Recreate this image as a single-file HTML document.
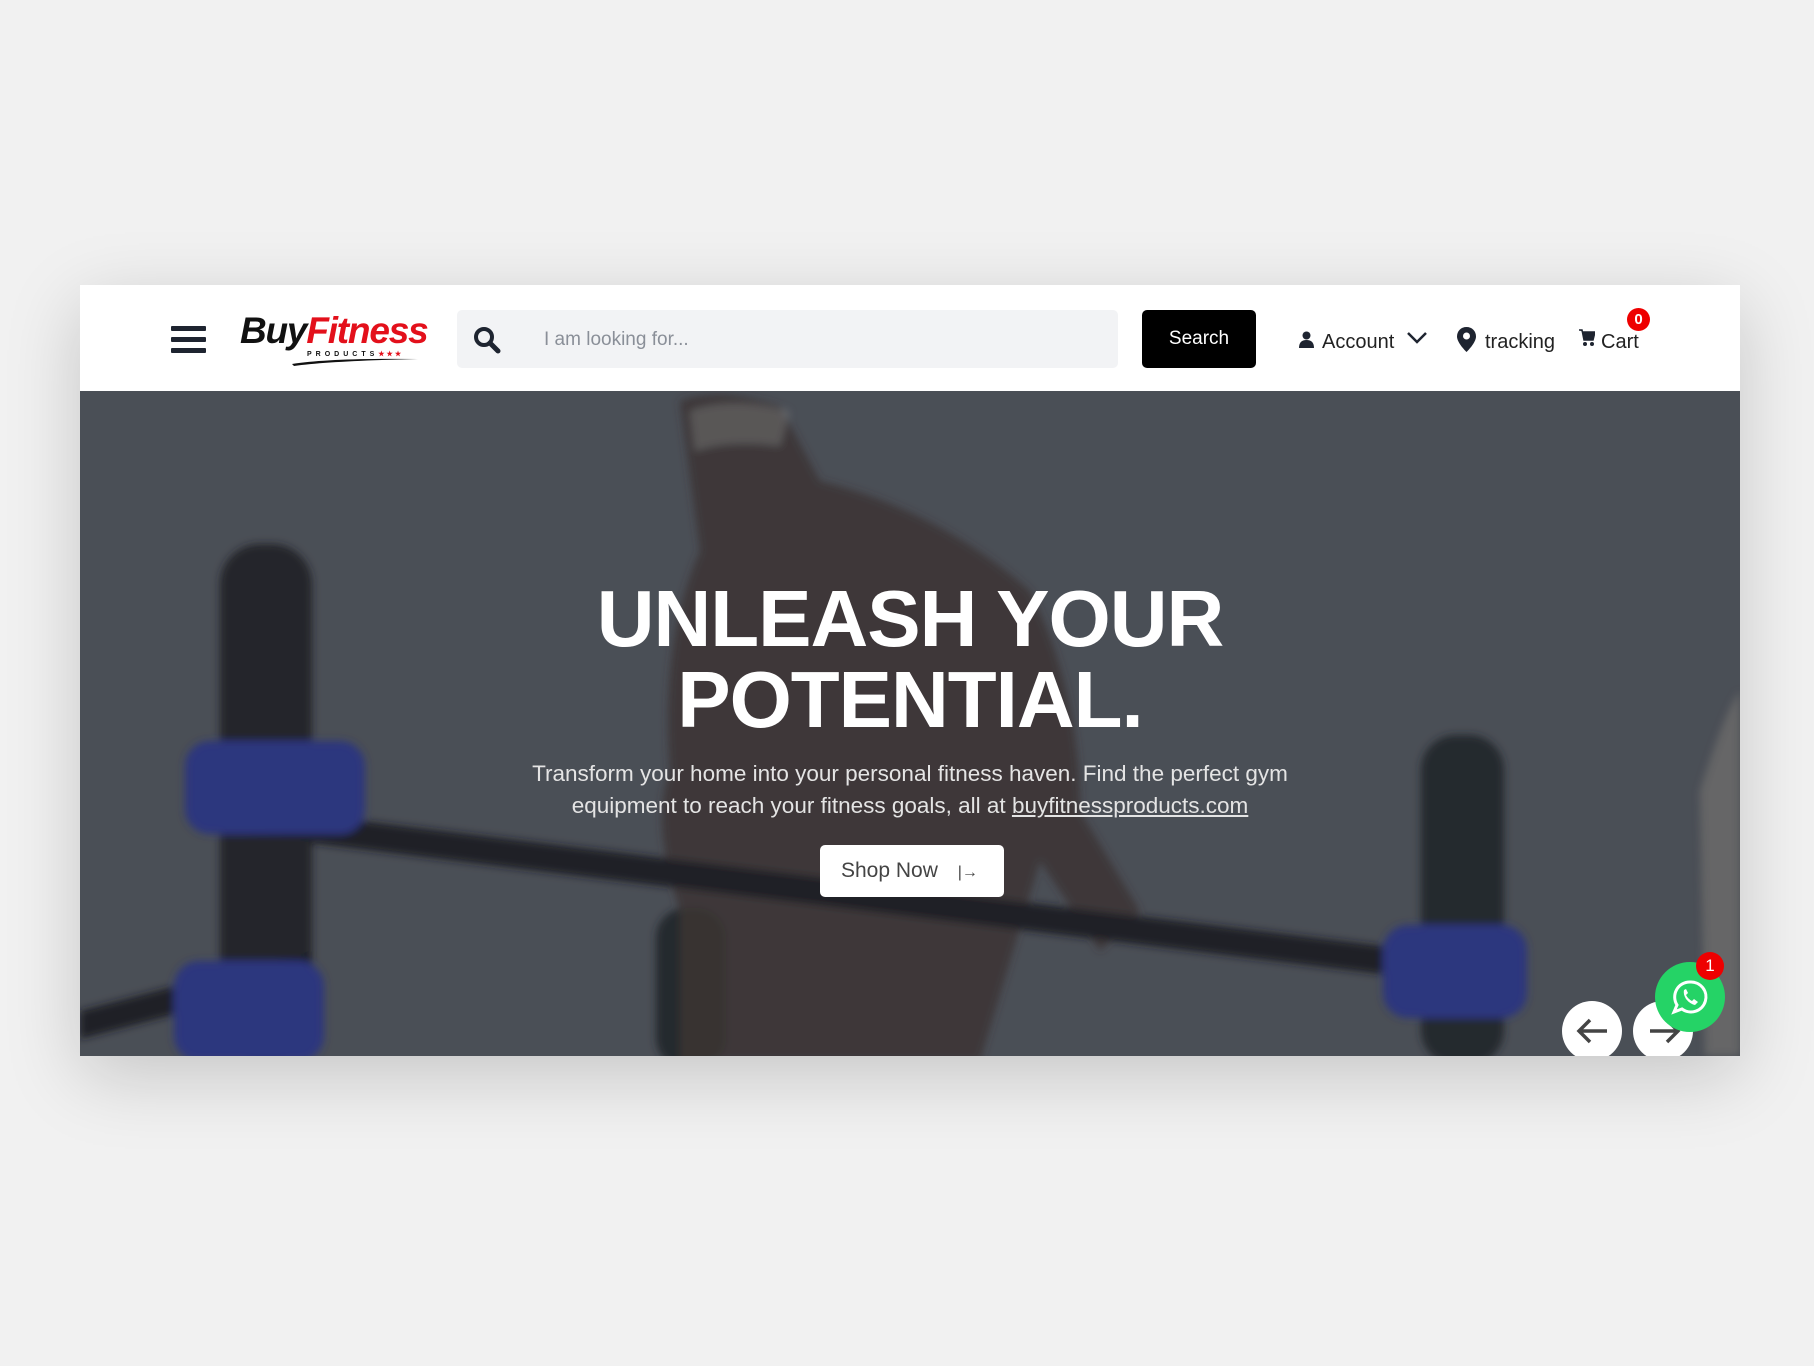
<!DOCTYPE html>
<html><head><meta charset="utf-8"><style>
*{margin:0;padding:0;box-sizing:border-box}
html,body{width:1814px;height:1366px;overflow:hidden;background:#f1f1f1;font-family:"Liberation Sans",Arial,sans-serif}
.card{position:absolute;left:80px;top:285px;width:1660px;height:771px;background:#fff;box-shadow:0 20px 70px rgba(0,0,0,.18)}
.nav{position:absolute;left:0;top:0;width:1660px;height:106px;background:#fff}
.hero{position:absolute;left:0;top:106px;width:1660px;height:665px;background:#4c5058;overflow:hidden}
.abs{position:absolute}
.t{font-size:20px;color:#222;position:absolute;top:44px;line-height:26px}
</style></head><body>
<div class="card">
 <div class="nav">
  <div class="abs" style="left:91px;top:41px;width:35px;height:5px;background:#1e2430;border-radius:1px"></div>
  <div class="abs" style="left:91px;top:52px;width:35px;height:5px;background:#1e2430;border-radius:1px"></div>
  <div class="abs" style="left:91px;top:63px;width:35px;height:5px;background:#1e2430;border-radius:1px"></div>
  <div class="abs" style="left:160px;top:26px;font-size:37px;font-weight:bold;font-style:italic;letter-spacing:-1.2px;line-height:40px"><span style="color:#111">Buy</span><span style="color:#e3101b">Fitness</span></div>
  <div class="abs" style="left:227px;top:65px;font-size:7px;font-weight:bold;letter-spacing:4px;color:#111">PRODUCTS<span style="color:#e3101b;letter-spacing:2px">★★★</span></div>
  <svg class="abs" style="left:210px;top:71px" width="130" height="10"><path d="M2 8 Q40 2 128 3 Q40 5 4 10Z" fill="#111"/></svg>
  <div class="abs" style="left:377px;top:25px;width:661px;height:58px;background:#f2f3f5;border-radius:5px"></div>
  <svg class="abs" style="left:392px;top:40px" width="30" height="30" viewBox="0 0 30 30"><circle cx="12" cy="12" r="8" fill="none" stroke="#1e2430" stroke-width="4"/><path d="M18 18 L26 26" stroke="#1e2430" stroke-width="5" stroke-linecap="round"/></svg>
  <div class="abs" style="left:464px;top:43px;font-size:19px;color:#8a8f98;line-height:24px">I am looking for...</div>
  <div class="abs" style="left:1062px;top:25px;width:114px;height:58px;background:#000;border-radius:5px;color:#fff;font-size:19px;text-align:center;line-height:58px">Search</div>
  <svg class="abs" style="left:1219px;top:46px" width="15" height="17" viewBox="0 0 15 17"><circle cx="7.5" cy="4.5" r="4" fill="#1e2430"/><path d="M0 17 Q0 9 7.5 9 Q15 9 15 17Z" fill="#1e2430"/></svg>
  <div class="t" style="left:1242px">Account</div>
  <svg class="abs" style="left:1326px;top:46px" width="22" height="14"><path d="M2 2 L11 11 L20 2" fill="none" stroke="#1e2430" stroke-width="2.5"/></svg>
  <svg class="abs" style="left:1377px;top:42px" width="19" height="25" viewBox="0 0 19 25"><path d="M9.5 0 C4 0 0 4 0 9.5 C0 16 9.5 25 9.5 25 C9.5 25 19 16 19 9.5 C19 4 15 0 9.5 0Z" fill="#1e2430"/><circle cx="9.5" cy="9" r="3.5" fill="#fff"/></svg>
  <div class="t" style="left:1405px">tracking</div>
  <svg class="abs" style="left:1499px;top:44px" width="16" height="18" viewBox="0 0 16 18"><path d="M0 1 H3 L5 11 H14 L16 3 H4" fill="#1e2430" stroke="#1e2430" stroke-width="1.5"/><circle cx="6" cy="15" r="2" fill="#1e2430"/><circle cx="13" cy="15" r="2" fill="#1e2430"/></svg>
  <div class="t" style="left:1521px">Cart</div>
  <div class="abs" style="left:1547px;top:23px;width:23px;height:23px;border-radius:50%;background:#ee0000;color:#fff;font-size:15px;font-weight:bold;text-align:center;line-height:23px">0</div>
 </div>
 <div class="hero">
  <svg class="abs" style="left:0;top:0" width="1660" height="665" viewBox="0 0 1660 665">
   <defs><filter id="b"><feGaussianBlur stdDeviation="4"/></filter></defs>
   <g filter="url(#b)">
   <rect x="140" y="153" width="92" height="520" rx="40" fill="#1c1f24"/>
   <rect x="576" y="517" width="70" height="160" rx="30" fill="#1f2227"/>
   <rect x="1341" y="344" width="83" height="330" rx="35" fill="#1e2126"/>
   <path d="M600 10 Q640 -5 700 15 L740 90 Q860 120 950 200 Q1000 300 1000 420 L1060 520 L1020 560 L960 470 L900 670 L600 670 L600 520 Q570 430 590 380 Q580 250 620 160 Z" fill="#3a302d" opacity=".85"/>
   <path d="M610 20 Q650 5 710 20 L700 55 Q650 48 615 60Z" fill="#a0a0a0" opacity=".35"/>
   <path d="M117 410 L1424 570 L1424 598 L117 438 Z" fill="#17191d"/>
   <path d="M0 620 L230 560 L230 588 L0 648Z" fill="#17191d"/>
   <rect x="105" y="350" width="180" height="93" rx="25" fill="#25328a"/>
   <rect x="94" y="570" width="150" height="100" rx="25" fill="#25328a"/>
   <rect x="1303" y="534" width="144" height="93" rx="25" fill="#25328a"/>
   <path d="M1620 400 Q1645 320 1660 300 L1660 665 L1625 665Z" fill="#8f8a82" opacity=".5"/>
   </g>
  </svg>
  <div class="abs" style="left:0;top:0;width:1660px;height:665px;background:rgba(70,74,82,.2)"></div>
  <div class="abs" style="left:0;top:187px;width:1660px;text-align:center;color:#fff;font-size:80px;font-weight:bold;line-height:81px;letter-spacing:-1px">UNLEASH YOUR<br>POTENTIAL.</div>
  <div class="abs" style="left:0;top:367px;width:1660px;text-align:center;color:#e4e4e4;font-size:22.5px;line-height:32px">Transform your home into your personal fitness haven. Find the perfect gym<br>equipment to reach your fitness goals, all at <u>buyfitnessproducts.com</u></div>
  <div class="abs" style="left:740px;top:454px;width:184px;height:52px;background:#fff;border-radius:5px;color:#444;font-size:21px;line-height:52px;padding-left:21px">Shop Now <span style="font-size:16px;margin-left:14px">|→</span></div>
  <div class="abs" style="left:1482px;top:610px;width:60px;height:60px;border-radius:50%;background:#fff"></div>
  <svg class="abs" style="left:1495px;top:625px" width="36" height="30"><path d="M32 15 H4 M15 4 L4 15 L15 26" fill="none" stroke="#444" stroke-width="3.5"/></svg>
  <div class="abs" style="left:1553px;top:610px;width:60px;height:60px;border-radius:50%;background:#fff"></div>
  <svg class="abs" style="left:1566px;top:625px" width="36" height="30"><path d="M4 15 H32 M21 4 L32 15 L21 26" fill="none" stroke="#444" stroke-width="3.5"/></svg>
 </div>
</div>
<div class="abs" style="left:1655px;top:962px;width:70px;height:70px;border-radius:50%;background:#25d366"></div>
<svg class="abs" style="left:1671px;top:978px" width="38" height="38" viewBox="0 0 38 38"><path d="M19 4 A15 15 0 1 1 11 31 L3 34 L6 27 A15 15 0 0 1 19 4Z" fill="none" stroke="#fff" stroke-width="3"/><path d="M13 12 Q12 16 15 21 Q19 26 24 27 L27 24 L23 21 L21 23 Q17 21 15 17 L17 15 L15 11Z" fill="#fff"/></svg>
<div class="abs" style="left:1696px;top:952px;width:28px;height:28px;border-radius:50%;background:#ee0000;color:#fff;font-size:17px;text-align:center;line-height:28px">1</div>
</body></html>
